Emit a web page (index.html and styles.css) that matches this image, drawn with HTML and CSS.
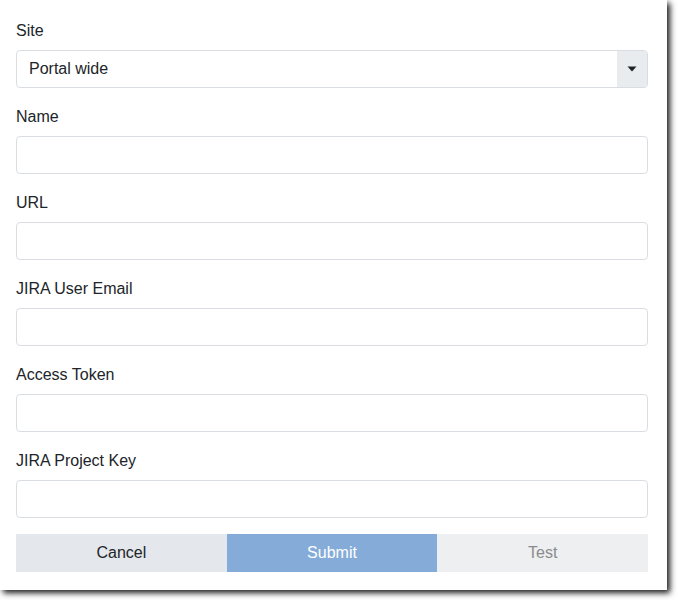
FILE: index.html
```html
<!DOCTYPE html>
<html>
<head>
<meta charset="utf-8">
<link rel="stylesheet" href="styles.css">
</head>
<body>
<div class="panel">
  <form class="form">
    <div class="group">
      <label class="label">Site</label>
      <div class="select">
        <span class="select-value">Portal wide</span>
        <span class="select-btn"><svg width="10" height="6" viewBox="0 0 10 6"><path d="M0.5 0.5 H9.5 L5 5.5 Z" fill="#222"/></svg></span>
      </div>
    </div>
    <div class="group">
      <label class="label">Name</label>
      <input class="input" type="text">
    </div>
    <div class="group">
      <label class="label">URL</label>
      <input class="input" type="text">
    </div>
    <div class="group">
      <label class="label">JIRA User Email</label>
      <input class="input" type="text">
    </div>
    <div class="group">
      <label class="label">Access Token</label>
      <input class="input" type="text">
    </div>
    <div class="group group-last">
      <label class="label">JIRA Project Key</label>
      <input class="input" type="text">
    </div>
    <div class="buttons">
      <button type="button" class="btn btn-cancel">Cancel</button>
      <button type="button" class="btn btn-submit">Submit</button>
      <button type="button" class="btn btn-test">Test</button>
    </div>
  </form>
</div>
</body>
</html>
```
FILE: styles.css
```css
html, body {
  margin: 0;
  padding: 0;
  background: #ffffff;
}
body {
  font-family: "Liberation Sans", Arial, sans-serif;
  font-size: 16px;
  color: #212529;
  min-height: 600px;
}
.panel {
  width: 667px;
  height: 590px;
  box-sizing: border-box;
  background: #fff;
  box-shadow: 3px 3px 6px rgba(0, 0, 0, 0.9);
  padding: 19px 19px 0 16px;
}
.form {
  display: flex;
  flex-direction: column;
}
.group {
  display: flex;
  flex-direction: column;
  margin-bottom: 17px;
}
.group-last {
  margin-bottom: 16px;
}
.label {
  line-height: 24px;
  margin-bottom: 7px;
}
.input, .select {
  box-sizing: border-box;
  height: 38px;
  border: 1px solid #d9dde2;
  border-radius: 4px;
  background: #fff;
  font: inherit;
  margin: 0;
  padding: 0 12px;
}
.select {
  display: flex;
  align-items: center;
  padding: 0 0 0 12px;
  overflow: hidden;
}
.select-value {
  flex: 1;
}
.select-btn {
  width: 30px;
  height: 100%;
  background: #e9ecef;
  display: flex;
  align-items: center;
  justify-content: center;
}
.buttons {
  display: grid;
  grid-template-columns: 1fr 1fr 1fr;
  height: 38px;
}
.btn {
  border: 0;
  margin: 0;
  font: inherit;
  font-size: 16px;
  padding: 0;
}
.btn-cancel {
  background: #e4e7eb;
  color: #212529;
}
.btn-submit {
  background: #85acd9;
  color: #fff;
}
.btn-test {
  background: #eeeff1;
  color: #8a8b8d;
}
```
